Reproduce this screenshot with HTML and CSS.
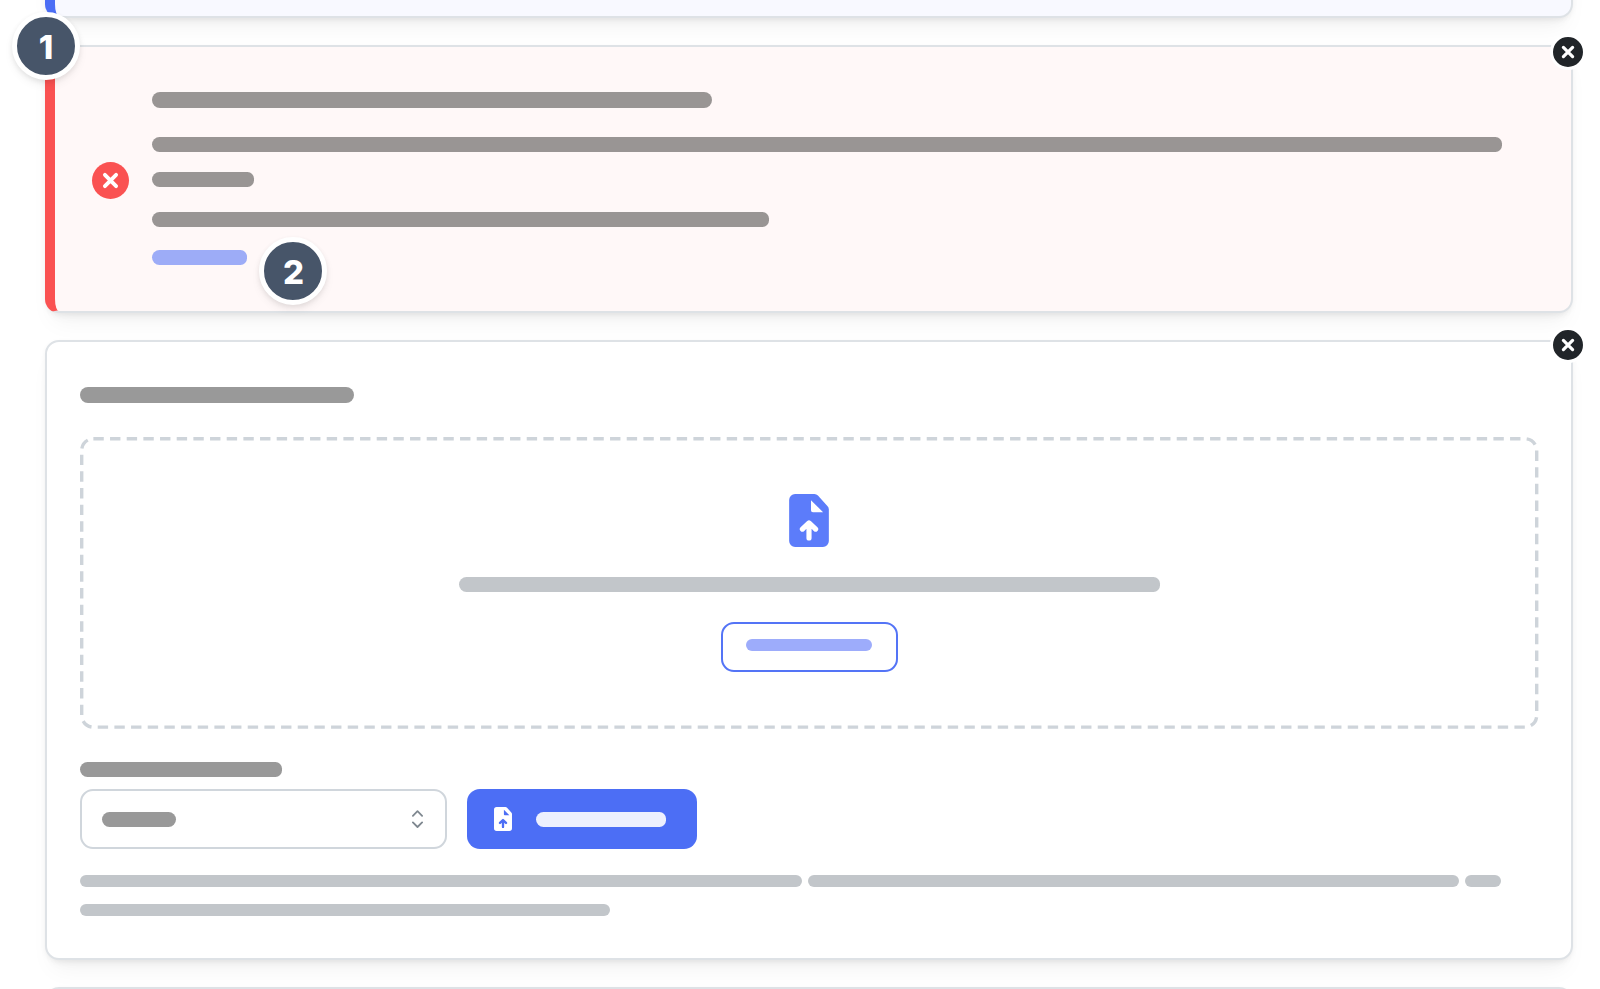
FILE: index.html
```
<!DOCTYPE html>
<html lang="en">
<head>
    <meta charset="UTF-8">
    <meta name="viewport" content="width=device-width, initial-scale=1.0">
    <title>Upload</title>
    <link rel="stylesheet" href="styles.css">
</head>
<body>
    <!-- Shared icons -->
    <svg class="sprite">
        <symbol id="icon-x" viewBox="0 0 14 14">
            <path d="M2.4 2.4l9.2 9.2M11.6 2.4L2.4 11.6" fill="none" stroke="currentColor" stroke-width="3.2" stroke-linecap="round"/>
        </symbol>
        <symbol id="icon-file" viewBox="0 0 40 53.4">
            <path fill="currentColor" fill-rule="evenodd" d="M6 0h19.5a5 5 0 0 1 3.5 1.5L38.5 12a5 5 0 0 1 1.5 3.6V47.4a6 6 0 0 1-6 6H6a6 6 0 0 1-6-6V6a6 6 0 0 1 6-6zM22 6.3v10a2 2 0 0 0 2 2h10.2zM17.4 35v9.3a2.6 2.6 0 0 0 5.2 0V35l2.2 2.2a2.6 2.6 0 0 0 3.7-3.7l-6.7-6.3a2.6 2.6 0 0 0-3.6 0l-6.7 6.3a2.6 2.6 0 0 0 3.7 3.7z"/>
        </symbol>
    </svg>

    <div class="stack">
        <div class="card info"></div>

        <!-- Error message -->
        <div class="card error">
            <span class="step step-one">1</span>
            <span class="close"><svg><use href="#icon-x"/></svg></span>
            <span class="error-icon"><svg><use href="#icon-x"/></svg></span>
            <div class="message">
                <div class="bar title error-title"></div>
                <div class="bar error-text"></div>
                <div class="bar error-rest"></div>
                <div class="bar error-hint"></div>
                <div class="bar link"></div>
            </div>
            <span class="step step-two">2</span>
        </div>

        <!-- Upload form -->
        <div class="card upload">
            <span class="close"><svg><use href="#icon-x"/></svg></span>
            <div class="bar title upload-title"></div>
            <div class="dropzone">
                <svg class="dashes"><rect x="1.7" y="1.7" width="1455" height="288.4" rx="11.67"/></svg>
                <svg class="file-icon"><use href="#icon-file"/></svg>
                <div class="bar muted drop-text"></div>
                <div class="browse-btn"><div class="bar browse-text"></div></div>
            </div>
            <div class="bar select-label"></div>
            <div class="controls">
                <div class="select">
                    <div class="bar select-value"></div>
                    <svg class="chevrons" viewBox="0 0 11 18">
                        <path d="M.9 5.8L5.5 1.2l4.6 4.6M.9 12.4L5.5 17l4.6-4.6"/>
                    </svg>
                </div>
                <div class="upload-btn">
                    <svg><use href="#icon-file"/></svg>
                    <div class="bar upload-text"></div>
                </div>
            </div>
            <div class="notes">
                <div class="bar muted note-one"></div>
                <div class="bar muted note-two"></div>
                <div class="bar muted note-three"></div>
                <div class="bar muted note-four"></div>
            </div>
        </div>

        <div class="card next"></div>
    </div>
</body>
</html>
```
FILE: styles.css
```
* {
    box-sizing: border-box;
    margin: 0;
    padding: 0;
}
body {
    height: 989px;
    overflow: hidden;
    background-color: #fff;
    font-family: Inter, sans-serif;
}
svg {
    display: block;
}
.sprite {
    display: none;
}
.stack {
    width: 1528px;
    margin: -82px 0 0 45px;
}

/* Cards */
.card {
    position: relative;
    margin-bottom: 27px;
    border: 2px solid #dee2e6;
    border-radius: 14px;
    background-color: #fff;
    box-shadow: 0 2px 5px rgba(0,0,0,0.05), 0 16px 25px -8px rgba(0,0,0,0.05), 0 11px 11px -8px rgba(0,0,0,0.04);
}
.info {
    height: 100px;
    border-left: 10px solid #4c6ef5;
    background-color: #f8f9ff;
}
.error {
    display: flex;
    height: 268px;
    padding: 45px 0 0 37px;
    border-left: 10px solid #fa5252;
    background-color: #fff8f8;
}
.upload {
    height: 620px;
    padding: 45px 33px 0;
}
.next {
    height: 40px;
    margin-bottom: 0;
}

/* Placeholder lines */
.bar {
    height: 15px;
    border-radius: 8px 7px 7px 8px;
    background-color: #999;
}
.title {
    height: 16px;
    border-radius: 8px;
}
.muted {
    background-color: #c2c6ca;
}
.error .bar {
    background-color: #999594;
}
.error .link {
    width: 95px;
    background-color: #9dacf7;
}
.error-title {
    width: 560px;
    margin-bottom: 29px;
}
.error-text {
    width: 1350px;
    margin-bottom: 20px;
}
.error-rest {
    width: 102px;
    margin-bottom: 25px;
}
.error-hint {
    width: 617px;
    margin-bottom: 23px;
}

/* Error icon, close buttons and step numbers */
.error-icon {
    display: flex;
    align-items: center;
    justify-content: center;
    width: 37px;
    height: 37px;
    margin: 70px 23px 0 0;
    border-radius: 50%;
    background-color: #fa5252;
    color: #fff;
}
.error-icon svg {
    width: 17px;
    height: 17px;
}
.close {
    position: absolute;
    top: -15px;
    right: -15px;
    display: flex;
    align-items: center;
    justify-content: center;
    width: 36px;
    height: 36px;
    border: 3px solid #fff;
    border-radius: 50%;
    background-color: #212529;
    color: #fff;
}
.error .close {
    top: -13.5px;
}
.close svg {
    width: 14px;
    height: 14px;
}
.step {
    position: absolute;
    display: flex;
    align-items: center;
    justify-content: center;
    width: 68px;
    height: 68px;
    padding-top: 2px;
    border: 5px solid #fff;
    border-radius: 50%;
    background-color: #475569;
    box-shadow: 0 2px 5px rgba(0,0,0,0.08), 0 5px 10px rgba(0,0,0,0.05);
    color: #fff;
    font-size: 33px;
    font-weight: 800;
    line-height: 1;
}
.step-one {
    top: -35px;
    left: -43px;
}
.step-two {
    top: 190px;
    left: 204px;
    padding-left: 1px;
}

/* Drop area */
.upload-title {
    width: 274px;
    margin-bottom: 34px;
}
.dropzone {
    position: relative;
    display: flex;
    flex-direction: column;
    align-items: center;
    width: 1458px;
    height: 292px;
    padding-top: 57px;
}
.dashes {
    position: absolute;
    top: 0;
    left: 0;
    width: 100%;
    height: 100%;
    overflow: visible;
}
.dashes rect {
    fill: none;
    stroke: #ced4da;
    stroke-width: 3.4;
    stroke-dasharray: 10.4 6.267;
}
.file-icon {
    width: 40px;
    height: 53px;
    color: #5c7cfa;
}
.drop-text {
    width: 701px;
    margin: 30px 0;
}
.browse-btn {
    width: 177px;
    height: 50px;
    padding: 15px 0 0 23px;
    border: 2px solid #5474f6;
    border-radius: 13px;
}
.browse-text {
    width: 126px;
    height: 12px;
    border-radius: 6px;
    background-color: #9dacfb;
}

/* Format select and upload button */
.select-label {
    width: 202px;
    margin: 33px 0 12px;
}
.controls {
    display: flex;
    gap: 20px;
    height: 60px;
}
.select {
    display: flex;
    align-items: center;
    justify-content: space-between;
    width: 367px;
    padding: 0 22.5px 0 20px;
    border: 2px solid #d0d6dc;
    border-radius: 13px;
}
.select-value {
    width: 74px;
    border-radius: 8px;
}
.chevrons {
    width: 11px;
    height: 18px;
    fill: none;
    stroke: #7f8890;
    stroke-width: 1.8;
    stroke-linecap: round;
    stroke-linejoin: round;
}
.upload-btn {
    display: flex;
    align-items: center;
    gap: 24px;
    width: 230px;
    padding-left: 27px;
    border-radius: 13px;
    background-color: #4c6ef5;
    color: #fff;
}
.upload-btn svg {
    width: 18px;
    height: 24px;
}
.upload-text {
    width: 130px;
    background-color: #edf0fe;
}

/* Notes */
.notes {
    display: flex;
    flex-wrap: wrap;
    gap: 17px 6px;
    margin-top: 26px;
}
.notes .bar {
    height: 12px;
    border-radius: 6px;
}
.note-one {
    width: 722px;
}
.note-two {
    width: 651px;
}
.note-three {
    width: 36px;
}
.note-four {
    width: 530px;
}
```
